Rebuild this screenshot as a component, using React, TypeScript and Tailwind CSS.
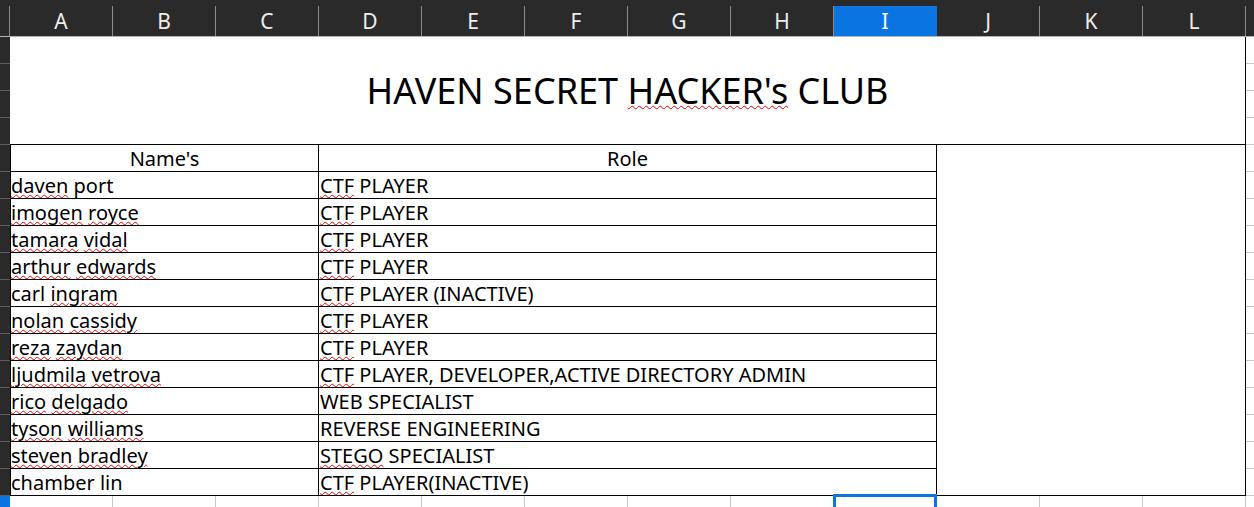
import React from "react";

/*
 * Spreadsheet view: dark column header strip (A–L, I selected), row strip on
 * the left, merged title A1:L4, a two-column bordered roster and an empty
 * merged block I5:L17. Row 18 is selected (I18).
 */
const COLS = ["A", "B", "C", "D", "E", "F", "G", "H", "I", "J", "K", "L"];
const FONT = "font-['Noto_Sans',sans-serif]";
const WAVY = "underline decoration-wavy decoration-[#ff0000] decoration-1 underline-offset-[1px]";

type Row = { name: string; role: string; flag: string[] };

const ROWS: Row[] = [
  { name: "daven port", role: "CTF PLAYER", flag: ["daven", "CTF"] },
  { name: "imogen royce", role: "CTF PLAYER", flag: ["imogen", "royce", "CTF"] },
  { name: "tamara vidal", role: "CTF PLAYER", flag: ["tamara", "vidal", "CTF"] },
  { name: "arthur edwards", role: "CTF PLAYER", flag: ["arthur", "edwards", "CTF"] },
  { name: "carl ingram", role: "CTF PLAYER (INACTIVE)", flag: ["ingram", "CTF"] },
  { name: "nolan cassidy", role: "CTF PLAYER", flag: ["nolan", "cassidy", "CTF"] },
  { name: "reza zaydan", role: "CTF PLAYER", flag: ["reza", "zaydan", "CTF"] },
  { name: "ljudmila vetrova", role: "CTF PLAYER, DEVELOPER,ACTIVE DIRECTORY ADMIN", flag: ["ljudmila", "vetrova", "CTF"] },
  { name: "rico delgado", role: "WEB SPECIALIST", flag: ["rico", "delgado"] },
  { name: "tyson williams", role: "REVERSE ENGINEERING", flag: ["tyson", "williams"] },
  { name: "steven bradley", role: "STEGO SPECIALIST", flag: ["steven", "bradley", "STEGO"] },
  { name: "chamber lin", role: "CTF PLAYER(INACTIVE)", flag: ["CTF"] },
];

function Spell({ text, flag }: { text: string; flag: string[] }) {
  const words = text.split(" ");
  return (
    <span className="whitespace-pre">
      {words.map((w, i) => (
        <React.Fragment key={i}>
          {i > 0 && " "}
          {flag.includes(w) ? <span className={WAVY}>{w}</span> : w}
        </React.Fragment>
      ))}
    </span>
  );
}

function ColumnHeader() {
  return (
    <div className="flex h-[37px] border-b border-[#b4b4b4] bg-[#2a2a2a]">
      <div className="mt-[6px] h-[30px] w-[10px] shrink-0 border-r border-[#8c8c8c]" />
      {COLS.map((c) => (
        <div
          key={c}
          className={`mt-[6px] flex h-[30px] w-[103px] shrink-0 items-center justify-center border-r pt-[1px] text-[21px] leading-none ${
            c === "I" ? "border-[#0a74e0] bg-[#0a74e0] text-white" : "border-[#8c8c8c] text-[#ededed]"
          }`}
        >
          {c}
        </div>
      ))}
      <div className="flex-1" />
    </div>
  );
}

function RowStrip({ color }: { color: string }) {
  return (
    <div className="flex w-[10px] shrink-0 flex-col bg-[#2a2a2a]">
      {Array.from({ length: 17 }).map((_, i) => (
        <div key={i} className={`h-[27px] border-b ${color}`} />
      ))}
    </div>
  );
}

export default function App() {
  return (
    <div className={`h-[507px] w-[1254px] overflow-hidden bg-white text-black ${FONT}`}>
      <ColumnHeader />

      <div className="flex">
        <RowStrip color="border-[#5e5e5e]" />

        <div className="flex w-[1236px] shrink-0 flex-col">
          <div className="flex h-[108px] items-center justify-center border-b border-r border-black">
            <p className="text-[36px] leading-none">
              <Spell text="HAVEN SECRET HACKER's CLUB" flag={["HACKER's"]} />
            </p>
          </div>

          <div className="flex border-l border-black">
            <div className="flex w-[926px] flex-col">
              <div className="flex h-[27px] border-b border-black text-[20px]">
                <div className="flex w-[308px] items-center justify-center border-r border-black pt-[1px]">Name's</div>
                <div className="flex flex-1 items-center justify-center border-r border-black pt-[1px]">Role</div>
              </div>
              {ROWS.map((r) => (
                <div key={r.name} className="flex h-[27px] border-b border-black text-[20px]">
                  <div className="flex w-[308px] items-center overflow-hidden border-r border-black pt-[1px]">
                    <Spell text={r.name} flag={r.flag} />
                  </div>
                  <div className="flex flex-1 items-center overflow-hidden border-r border-black pl-[1px] pt-[1px]">
                    <Spell text={r.role} flag={r.flag} />
                  </div>
                </div>
              ))}
            </div>
            <div className="w-[309px] border-b border-r border-black" />
          </div>
        </div>

        <div className="flex flex-1 flex-col">
          {Array.from({ length: 17 }).map((_, i) => (
            <div key={i} className="h-[27px] border-b border-[#c8c8c8]" />
          ))}
        </div>
      </div>

      <div className="flex h-[20px]">
        <div className="w-[10px] shrink-0 bg-[#0a74e0]" />
        {COLS.map((c) => (
          <div key={c} className="relative w-[103px] shrink-0 border-r border-[#c8c8c8]">
            {c === "I" && (
              <div className="absolute -left-[1px] -top-[2px] h-[22px] w-[104px] border-[3px] border-[#0a74e0]" />
            )}
          </div>
        ))}
      </div>
    </div>
  );
}
